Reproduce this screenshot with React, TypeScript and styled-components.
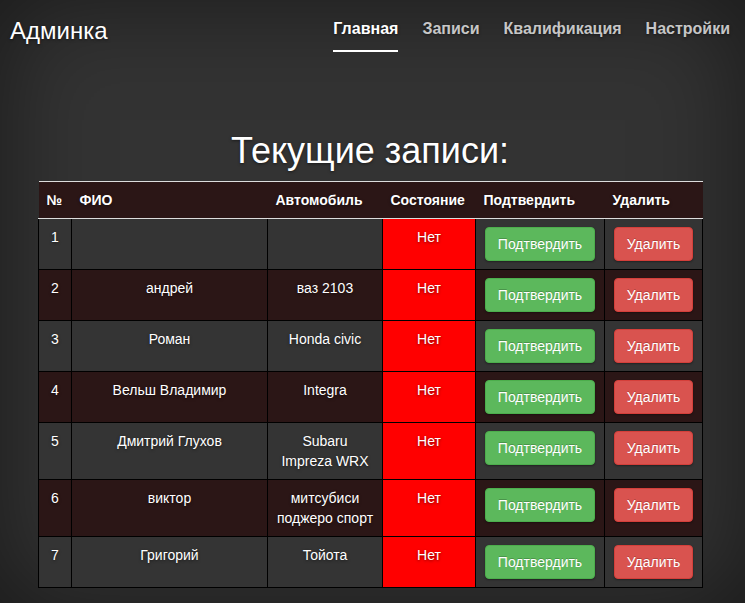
import React from "react";
import styled, { createGlobalStyle } from "styled-components";

const Global = createGlobalStyle`
  html, body {
    margin: 0;
    padding: 0;
    height: 100%;
  }
  body {
    background: #333;
    color: #fff;
    font-family: "Liberation Sans", Arial, sans-serif;
    font-size: 14px;
    line-height: 20px;
    text-shadow: 0 1px 3px rgba(0, 0, 0, 0.5);
    box-shadow: inset 0 0 100px rgba(0, 0, 0, 0.5);
    min-height: 603px;
  }
`;

const Page = styled.div`
  min-height: 603px;
  box-sizing: border-box;
`;

const Masthead = styled.header`
  display: flex;
  justify-content: space-between;
  align-items: flex-start;
  padding: 18px 15px 0 10px;
`;

const Brand = styled.h3`
  margin: 0;
  font-size: 24px;
  font-weight: normal;
  line-height: 26px;
`;

const Nav = styled.nav`
  display: flex;
  gap: 24px;
  margin-top: 1px;
`;

const NavLink = styled.a<{ $active?: boolean }>`
  display: block;
  font-size: 16px;
  font-weight: bold;
  line-height: 20px;
  padding-bottom: 11px;
  text-decoration: none;
  color: ${(p) => (p.$active ? "#fff" : "rgba(255,255,255,0.75)")};
  border-bottom: 2px solid ${(p) => (p.$active ? "#fff" : "transparent")};
  cursor: pointer;
`;

const Content = styled.main`
  width: 664px;
  margin: 79px 0 0 38px;
`;

const Title = styled.h1`
  margin: 0 0 10px;
  font-size: 36px;
  font-weight: normal;
  line-height: 40px;
  text-align: center;
`;

const Table = styled.table`
  width: 664px;
  border-collapse: collapse;
  table-layout: fixed;
`;

const HeadCell = styled.th`
  background: #2b1616;
  text-align: left;
  font-weight: bold;
  padding: 8px;
  line-height: 20px;
  border-top: 1px solid #ddd;
  border-bottom: 1px solid #ddd;
  white-space: nowrap;
`;

const Row = styled.tr<{ $dark: boolean }>`
  background: ${(p) => (p.$dark ? "#2b1616" : "#343434")};
`;

const Cell = styled.td<{ $status?: boolean }>`
  border: 1px solid #000;
  padding: 8px;
  vertical-align: top;
  text-align: center;
  line-height: 20px;
  background: ${(p) => (p.$status ? "#ff0000" : "transparent")};
`;

const Button = styled.button<{ $kind: "ok" | "del" }>`
  font-family: "Liberation Sans", Arial, sans-serif;
  font-size: 14px;
  line-height: 20px;
  padding: 6px 12px;
  border-radius: 4px;
  color: #fff;
  text-shadow: 0 -1px 0 rgba(0, 0, 0, 0.2);
  cursor: pointer;
  background: ${(p) => (p.$kind === "ok" ? "#5cb85c" : "#d9534f")};
  border: 1px solid ${(p) => (p.$kind === "ok" ? "#4cae4c" : "#d43f3a")};
  box-shadow: 0 1px 2px rgba(0, 0, 0, 0.35);
`;

const rows = [
  { n: 1, name: "", car: "" },
  { n: 2, name: "андрей", car: "ваз 2103" },
  { n: 3, name: "Роман", car: "Honda civic" },
  { n: 4, name: "Вельш Владимир", car: "Integra" },
  { n: 5, name: "Дмитрий Глухов", car: "Subaru Impreza WRX" },
  { n: 6, name: "виктор", car: "митсубиси поджеро спорт" },
  { n: 7, name: "Григорий", car: "Тойота" },
];

const widths = [33, 196, 115, 93, 129, 98];

export default function App() {
  return (
    <Page>
      <Global />
      <Masthead>
        <Brand>Админка</Brand>
        <Nav>
          <NavLink $active>Главная</NavLink>
          <NavLink>Записи</NavLink>
          <NavLink>Квалификация</NavLink>
          <NavLink>Настройки</NavLink>
        </Nav>
      </Masthead>
      <Content>
        <Title>Текущие записи:</Title>
        <Table>
          <colgroup>
            {widths.map((w, i) => (
              <col key={i} style={{ width: w }} />
            ))}
          </colgroup>
          <thead>
            <tr>
              <HeadCell>№</HeadCell>
              <HeadCell>ФИО</HeadCell>
              <HeadCell>Автомобиль</HeadCell>
              <HeadCell>Состояние</HeadCell>
              <HeadCell>Подтвердить</HeadCell>
              <HeadCell>Удалить</HeadCell>
            </tr>
          </thead>
          <tbody>
            {rows.map((r, i) => (
              <Row key={r.n} $dark={i % 2 === 1}>
                <Cell>{r.n}</Cell>
                <Cell>{r.name}</Cell>
                <Cell>{r.car}</Cell>
                <Cell $status>Нет</Cell>
                <Cell>
                  <Button $kind="ok">Подтвердить</Button>
                </Cell>
                <Cell>
                  <Button $kind="del">Удалить</Button>
                </Cell>
              </Row>
            ))}
          </tbody>
        </Table>
      </Content>
    </Page>
  );
}
